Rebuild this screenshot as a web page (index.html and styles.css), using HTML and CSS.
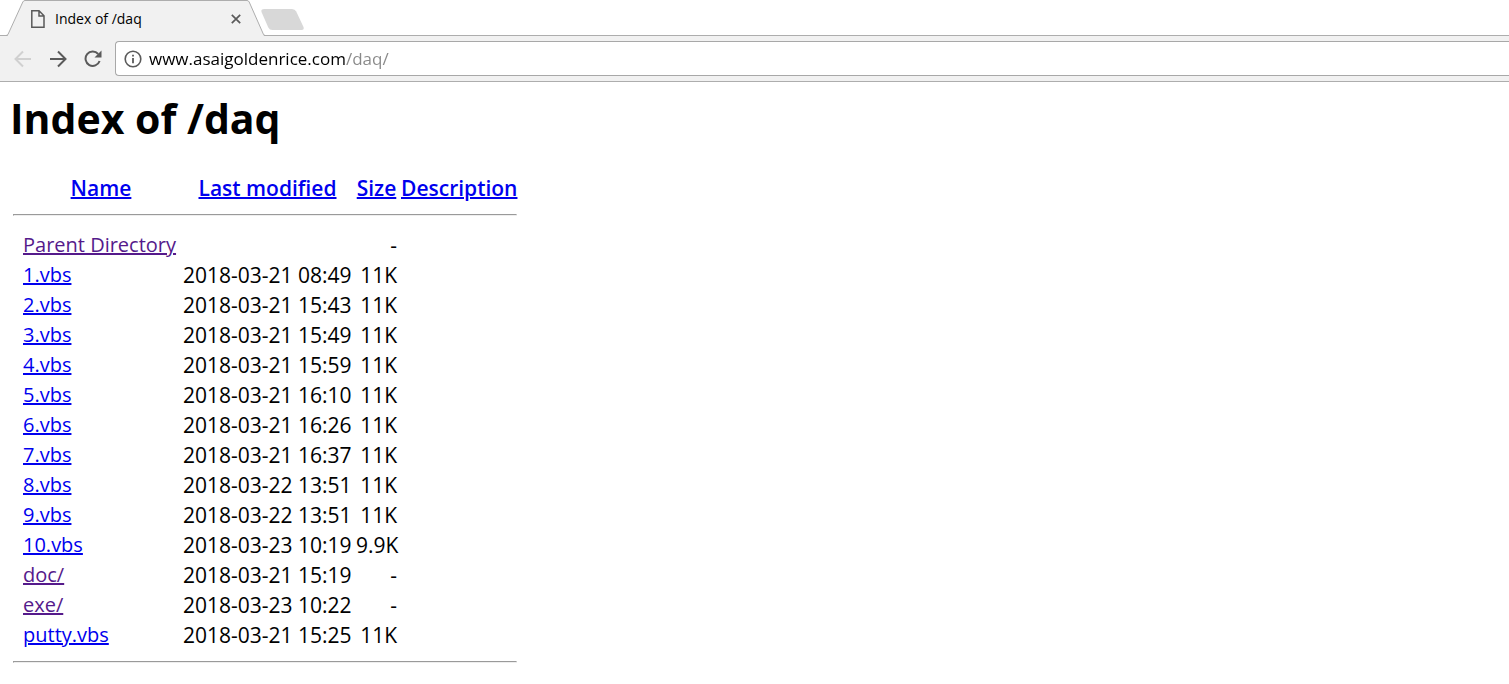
FILE: index.html
```html
<!DOCTYPE html>
<html lang="en">
<head>
<meta charset="utf-8">
<title>Index of /daq</title>
<link rel="stylesheet" href="styles.css">
</head>
<body>
<header class="browser">
  <div class="tab-strip">
    <svg class="tab-shape" width="309" height="36" viewBox="0 0 309 36" aria-hidden="true">
      <path d="M7.500 36L22.800 2Q23.500.5 25 .5H247Q248.500.5 249.200 2L264 36Z" fill="#f1f1f1"/>
      <path d="M0 35.500H6Q7.500 35.500 8.200 34L22.800 2Q23.500.5 25 .5H247Q248.500.5 249.200 2L263.300 34Q264 35.500 265.500 35.500H309" fill="none" stroke="#adadad"/>
      <path d="M264.500 9H292Q295 9 296.200 11.500L303.500 27Q304.500 30 301.500 30H272.500Q269.500 30 268.300 27.500L261.500 12Q260.500 9 264.500 9Z" fill="#d8d8d8"/>
    </svg>
    <div class="tab">
      <svg class="page-icon" width="14" height="18" viewBox="0 0 14 18" fill="none" stroke="#5a5a5a" stroke-width="1.500" aria-hidden="true"><path d="M.8.8H8L13 5.800V17.200H.8ZM8 .8V6H13"/></svg>
      <span class="tab-title">Index of /daq</span>
      <button class="tab-close" aria-label="Close tab"><svg width="10" height="10" viewBox="0 0 10 10" stroke="#5a5a5a" stroke-width="1.700"><path d="M.8.8L9.200 9.200M9.200.8L.8 9.200"/></svg></button>
    </div>
  </div>
  <div class="toolbar">
    <button class="nav" aria-label="Back" disabled><svg width="18" height="18" viewBox="0 0 18 18" fill="none" stroke="#d0d0d0" stroke-width="2"><path d="M17 9H2M9 1.500L1.500 9L9 16.500"/></svg></button>
    <button class="nav" aria-label="Forward"><svg width="18" height="18" viewBox="0 0 18 18" fill="none" stroke="#5a5a5a" stroke-width="2"><path d="M1 9H16M9 1.500L16.500 9L9 16.500"/></svg></button>
    <button class="nav" aria-label="Reload"><svg width="18" height="18" viewBox="0 0 18 18" fill="none" stroke="#5a5a5a" stroke-width="2"><path d="M14.200 4A7.200 7.200 0 1 0 15.600 11"/><path d="M17.500.5V7.500H10.500Z" fill="#5a5a5a" stroke="none"/></svg></button>
    <div class="address">
      <svg width="18" height="18" viewBox="0 0 18 18" fill="none" stroke="#5a5a5a" stroke-width="1.600" aria-hidden="true"><circle cx="9" cy="9" r="7.800"/><path d="M9 8V13.200M9 4.700V6.500" stroke-width="1.800"/></svg>
      <input class="url" type="text" aria-label="Address" value="www.asaigoldenrice.com/daq/" spellcheck="false">
    </div>
  </div>
</header>
<main class="listing">
  <h1>Index of /daq</h1>
  <table>
    <colgroup><col class="c-indent"><col class="c-name"><col class="c-date"><col class="c-size"><col class="c-desc"></colgroup>
    <thead>
      <tr><th></th><th><a href="?C=N">Name</a></th><th><a href="?C=M">Last modified</a></th><th><a href="?C=S">Size</a></th><th><a href="?C=D">Description</a></th></tr>
      <tr><td class="rule" colspan="5"><hr></td></tr>
    </thead>
    <tbody>
      <tr><td></td><td class="name"><a class="visited" href="/">Parent Directory</a></td><td></td><td class="size">-</td><td></td></tr>
      <tr><td></td><td class="name"><a href="1.vbs">1.vbs</a></td><td>2018-03-21 08:49</td><td class="size">11K</td><td></td></tr>
      <tr><td></td><td class="name"><a href="2.vbs">2.vbs</a></td><td>2018-03-21 15:43</td><td class="size">11K</td><td></td></tr>
      <tr><td></td><td class="name"><a href="3.vbs">3.vbs</a></td><td>2018-03-21 15:49</td><td class="size">11K</td><td></td></tr>
      <tr><td></td><td class="name"><a href="4.vbs">4.vbs</a></td><td>2018-03-21 15:59</td><td class="size">11K</td><td></td></tr>
      <tr><td></td><td class="name"><a href="5.vbs">5.vbs</a></td><td>2018-03-21 16:10</td><td class="size">11K</td><td></td></tr>
      <tr><td></td><td class="name"><a href="6.vbs">6.vbs</a></td><td>2018-03-21 16:26</td><td class="size">11K</td><td></td></tr>
      <tr><td></td><td class="name"><a href="7.vbs">7.vbs</a></td><td>2018-03-21 16:37</td><td class="size">11K</td><td></td></tr>
      <tr><td></td><td class="name"><a href="8.vbs">8.vbs</a></td><td>2018-03-22 13:51</td><td class="size">11K</td><td></td></tr>
      <tr><td></td><td class="name"><a href="9.vbs">9.vbs</a></td><td>2018-03-22 13:51</td><td class="size">11K</td><td></td></tr>
      <tr><td></td><td class="name"><a href="10.vbs">10.vbs</a></td><td>2018-03-23 10:19</td><td class="size">9.9K</td><td></td></tr>
      <tr><td></td><td class="name"><a class="visited" href="doc/">doc/</a></td><td>2018-03-21 15:19</td><td class="size">-</td><td></td></tr>
      <tr><td></td><td class="name"><a class="visited" href="exe/">exe/</a></td><td>2018-03-23 10:22</td><td class="size">-</td><td></td></tr>
      <tr><td></td><td class="name"><a href="putty.vbs">putty.vbs</a></td><td>2018-03-21 15:25</td><td class="size">11K</td><td></td></tr>
      <tr><td class="rule" colspan="5"><hr></td></tr>
    </tbody>
  </table>
</main>
</body>
</html>
```

FILE: styles.css
```css
* { box-sizing: border-box; }
body {
  margin: 0;
  background: #fff;
  color: #000;
  font-family: "Open Sans", "Noto Sans", sans-serif;
  font-size: 21px;
}
button {
  display: flex;
  padding: 0;
  border: 0;
  background: none;
}
svg { display: block; flex: none; }

.tab-strip {
  position: relative;
  height: 36px;
  background: linear-gradient(#adadad, #adadad) bottom / 100% 1px no-repeat;
}
.tab-shape { position: absolute; top: 0; left: 0; }
.tab {
  position: relative;
  display: flex;
  align-items: center;
  width: 241px;
  height: 37px;
  padding-left: 31px;
}
.tab-title {
  flex: 1;
  margin-left: 10px;
  font-size: 14px;
  line-height: 20px;
}

.toolbar {
  display: flex;
  align-items: center;
  gap: 17px;
  height: 46px;
  padding-left: 14px;
  background: #f1f1f1;
  border-bottom: 1px solid #adadad;
}
.address {
  display: flex;
  flex: 1;
  align-items: center;
  gap: 7px;
  height: 35px;
  margin-left: -4px;
  padding-left: 8px;
  background: #fff;
  border: 1px solid #a8a8a8;
  border-right: 0;
  border-radius: 4px 0 0 4px;
}
/* Host in black, path in grey */
.url {
  flex: 1;
  padding: 0;
  border: 0;
  outline: 0;
  background: linear-gradient(to right, #000 196px, #888 196px);
  -webkit-background-clip: text;
  background-clip: text;
  -webkit-text-fill-color: transparent;
  font-family: inherit;
  font-size: 17px;
  line-height: 28px;
}

.listing { padding: 6px 10px; }
h1 {
  margin: 0 0 25px;
  font-size: 41px;
  font-weight: 700;
  line-height: 60px;
}
table {
  width: 508px;
  margin-left: 1px;
  table-layout: fixed;
  border-collapse: collapse;
}
.c-indent { width: 10px; }
.c-name { width: 160px; }
.c-date { width: 173px; }
.c-size { width: 45px; }
.c-desc { width: 120px; }
th, td {
  height: 30px;
  padding: 0 2px;
  line-height: 30px;
  text-align: left;
  white-space: nowrap;
}
th {
  font-weight: 600;
  text-align: center;
}
.name { font-size: 20px; }
.size { text-align: right; }
.rule { height: auto; }
hr {
  margin: 11px 0 14px;
  border: 1px inset #eee;
}
a {
  color: #00e;
  text-decoration-thickness: 2px;
}
a.visited { color: #551a8b; }
```
